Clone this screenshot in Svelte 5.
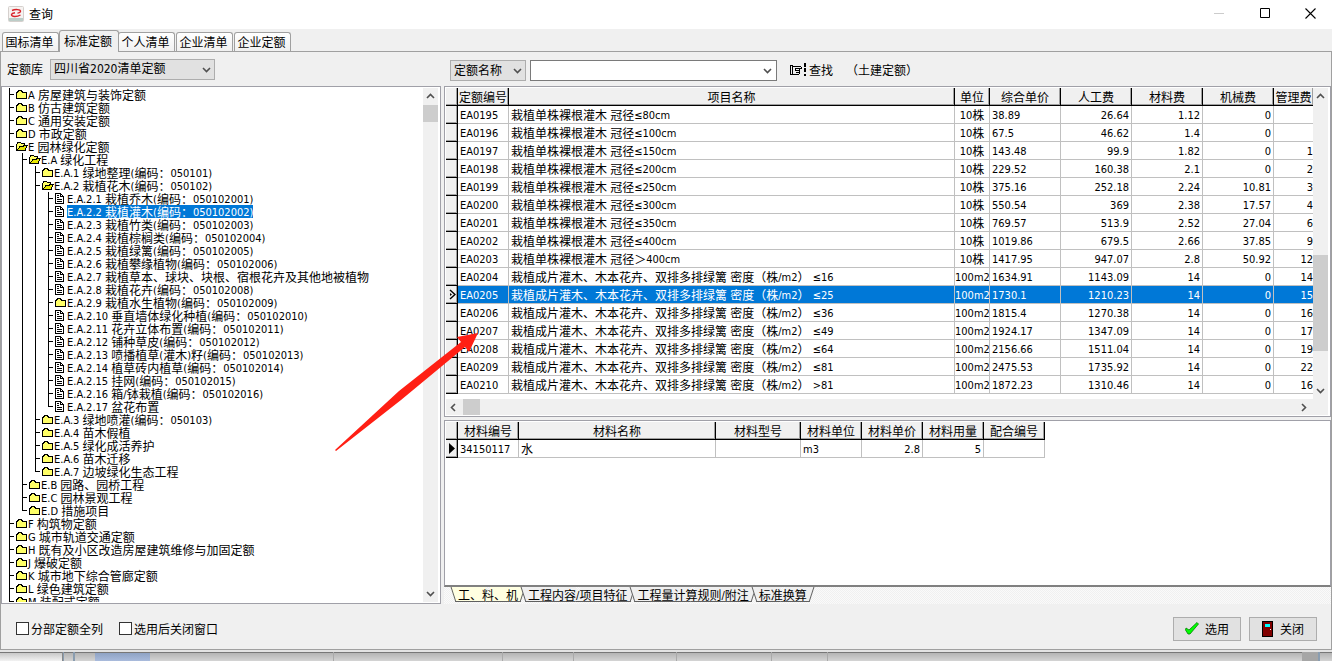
<script lang="ts">
  type Kind = 'folder' | 'open' | 'doc';
  type Node = { depth: number; kind: Kind; text: string };

  const pageTabs = ['国标清单', '标准定额', '个人清单', '企业清单', '企业定额'];
  const detailTabs = ['工、料、机', '工程内容/项目特征', '工程量计算规则/附注', '标准换算'];

  let activePage = $state(1);
  let activeDetail = $state(0);
  let selectedNode = $state(9);
  let selectedRow = $state(10);
  let keyword = $state('');

  const nodes: Node[] = [
    { depth: 0, kind: 'folder', text: 'A 房屋建筑与装饰定额' },
    { depth: 0, kind: 'folder', text: 'B 仿古建筑定额' },
    { depth: 0, kind: 'folder', text: 'C 通用安装定额' },
    { depth: 0, kind: 'folder', text: 'D 市政定额' },
    { depth: 0, kind: 'open', text: 'E 园林绿化定额' },
    { depth: 1, kind: 'open', text: 'E.A 绿化工程' },
    { depth: 2, kind: 'folder', text: 'E.A.1 绿地整理(编码：050101)' },
    { depth: 2, kind: 'open', text: 'E.A.2 栽植花木(编码：050102)' },
    { depth: 3, kind: 'doc', text: 'E.A.2.1 栽植乔木(编码：050102001)' },
    { depth: 3, kind: 'doc', text: 'E.A.2.2 栽植灌木(编码：050102002)' },
    { depth: 3, kind: 'doc', text: 'E.A.2.3 栽植竹类(编码：050102003)' },
    { depth: 3, kind: 'doc', text: 'E.A.2.4 栽植棕榈类(编码：050102004)' },
    { depth: 3, kind: 'doc', text: 'E.A.2.5 栽植绿篱(编码：050102005)' },
    { depth: 3, kind: 'doc', text: 'E.A.2.6 栽植攀缘植物(编码：050102006)' },
    { depth: 3, kind: 'doc', text: 'E.A.2.7 栽植草本、球块、块根、宿根花卉及其他地被植物' },
    { depth: 3, kind: 'doc', text: 'E.A.2.8 栽植花卉(编码：050102008)' },
    { depth: 3, kind: 'folder', text: 'E.A.2.9 栽植水生植物(编码：050102009)' },
    { depth: 3, kind: 'doc', text: 'E.A.2.10 垂直墙体绿化种植(编码：050102010)' },
    { depth: 3, kind: 'doc', text: 'E.A.2.11 花卉立体布置(编码：050102011)' },
    { depth: 3, kind: 'doc', text: 'E.A.2.12 铺种草皮(编码：050102012)' },
    { depth: 3, kind: 'doc', text: 'E.A.2.13 喷播植草(灌木)籽(编码：050102013)' },
    { depth: 3, kind: 'doc', text: 'E.A.2.14 植草砖内植草(编码：050102014)' },
    { depth: 3, kind: 'doc', text: 'E.A.2.15 挂网(编码：050102015)' },
    { depth: 3, kind: 'doc', text: 'E.A.2.16 箱/钵栽植(编码：050102016)' },
    { depth: 3, kind: 'doc', text: 'E.A.2.17 盆花布置' },
    { depth: 2, kind: 'folder', text: 'E.A.3 绿地喷灌(编码：050103)' },
    { depth: 2, kind: 'folder', text: 'E.A.4 苗木假植' },
    { depth: 2, kind: 'folder', text: 'E.A.5 绿化成活养护' },
    { depth: 2, kind: 'folder', text: 'E.A.6 苗木迁移' },
    { depth: 2, kind: 'folder', text: 'E.A.7 边坡绿化生态工程' },
    { depth: 1, kind: 'folder', text: 'E.B 园路、园桥工程' },
    { depth: 1, kind: 'folder', text: 'E.C 园林景观工程' },
    { depth: 1, kind: 'folder', text: 'E.D 措施项目' },
    { depth: 0, kind: 'folder', text: 'F 构筑物定额' },
    { depth: 0, kind: 'folder', text: 'G 城市轨道交通定额' },
    { depth: 0, kind: 'folder', text: 'H 既有及小区改造房屋建筑维修与加固定额' },
    { depth: 0, kind: 'folder', text: 'J 爆破定额' },
    { depth: 0, kind: 'folder', text: 'K 城市地下综合管廊定额' },
    { depth: 0, kind: 'folder', text: 'L 绿色建筑定额' },
    { depth: 0, kind: 'folder', text: 'M 装配式定额' },
  ];

  const single = '栽植单株裸根灌木 冠径';
  const massed = '栽植成片灌木、木本花卉、双排多排绿篱 密度（株/m2） ';

  const rows = [
    ['EA0195', single + '≤80cm', '10株', '38.89', '26.64', '1.12', '0', ''],
    ['EA0196', single + '≤100cm', '10株', '67.5', '46.62', '1.4', '0', ''],
    ['EA0197', single + '≤150cm', '10株', '143.48', '99.9', '1.82', '0', '1'],
    ['EA0198', single + '≤200cm', '10株', '229.52', '160.38', '2.1', '0', '2'],
    ['EA0199', single + '≤250cm', '10株', '375.16', '252.18', '2.24', '10.81', '3'],
    ['EA0200', single + '≤300cm', '10株', '550.54', '369', '2.38', '17.57', '4'],
    ['EA0201', single + '≤350cm', '10株', '769.57', '513.9', '2.52', '27.04', '6'],
    ['EA0202', single + '≤400cm', '10株', '1019.86', '679.5', '2.66', '37.85', '9'],
    ['EA0203', single + '＞400cm', '10株', '1417.95', '947.07', '2.8', '50.92', '12'],
    ['EA0204', massed + '≤16', '100m2', '1634.91', '1143.09', '14', '0', '14'],
    ['EA0205', massed + '≤25', '100m2', '1730.1', '1210.23', '14', '0', '15'],
    ['EA0206', massed + '≤36', '100m2', '1815.4', '1270.38', '14', '0', '16'],
    ['EA0207', massed + '≤49', '100m2', '1924.17', '1347.09', '14', '0', '17'],
    ['EA0208', massed + '≤64', '100m2', '2156.66', '1511.04', '14', '0', '19'],
    ['EA0209', massed + '≤81', '100m2', '2475.53', '1735.92', '14', '0', '22'],
    ['EA0210', massed + '>81', '100m2', '1872.23', '1310.46', '14', '0', '16'],
  ];

  const columns = ['定额编号', '项目名称', '单位', '综合单价', '人工费', '材料费', '机械费', '管理费'];
  const materialColumns = ['材料编号', '材料名称', '材料型号', '材料单位', '材料单价', '材料用量', '配合编号'];
  const material = ['34150117', '水', '', 'm3', '2.8', '5', ''];

  // true when another node follows on this level before its parent closes
  function continues(index: number, level: number) {
    for (let i = index + 1; i < nodes.length; i++) {
      if (nodes[i].depth < level) return false;
      if (nodes[i].depth === level) return true;
    }
    return false;
  }

  // Latin runs are set one size smaller than the Chinese text
  function runs(text: string) {
    return text.split(/([\x20-\x7e≤]+)/).filter((s) => s !== '');
  }
</script>

{#snippet mixed(text: string)}{#each runs(text) as run}{#if /^[\x20-\x7e≤]/.test(run)}<span class="latin">{run}</span>{:else}{run}{/if}{/each}{/snippet}

{#snippet chevron(dir: string)}
  <svg class="chevron {dir}" width="9" height="9" viewBox="0 0 9 9" aria-hidden="true">
    <path d="M1 3 L4.5 6.5 L8 3" fill="none" stroke="currentColor" stroke-width="1.6" />
  </svg>
{/snippet}

{#snippet nodeIcon(kind: Kind)}
  <svg class="node-icon" width="12" height="13" viewBox="0 0 12 13" shape-rendering="crispEdges" aria-hidden="true">
    {#if kind === 'doc'}
      <path d="M.5 1.500h5l3 3v7h-8z" fill="#fff" stroke="#000" />
      <path d="M5.500 1.500v3h3M2 3.500h2M2 5.500h2M2 7.500h5M2 9.500h5" fill="none" stroke="#000" />
    {:else if kind === 'open'}
      <path d="M.5 10.5v-6l1-1v-1h3l1 1h3v3" fill="#ffff66" stroke="#000" />
      <path d="M1 10.5l3-4h3l1-1h3l-2 5h-8z" fill="#e6e600" stroke="#000" />
    {:else}
      <path d="M.5 4.500l1-1h1l1-1h2l1 1h4v7h-10z" fill="#ffff66" stroke="none" />
      <path d="M.5 10.5v-6h1v-1h1v-1h3v1h1v1h4v6h-10z" fill="none" stroke="#000" />
    {/if}
  </svg>
{/snippet}

<div class="window">
  <header class="titlebar">
    <svg class="logo" width="16" height="16" viewBox="0 0 16 16" aria-hidden="true">
      <rect x=".5" y=".5" width="15" height="15" rx="1" fill="#f6f3f1" stroke="#d5d0cd" />
      <path d="M1 12h14v3H1z" fill="#bccdc8" />
      <path d="M4 4.500C7 3 13 3.200 12.500 5.500C12.200 6.800 10.500 7 9.500 7.200M12.500 9C9 11 3 11 3.500 8.500C3.800 7.500 5.500 7 7 6.800" fill="none" stroke="#d8232a" stroke-width="1.400" />
    </svg>
    <span class="title">查询</span>
    <div class="window-buttons">
      <button aria-label="最小化" disabled>
        <svg width="11" height="11" viewBox="0 0 11 11"><path d="M0 5.500h10" stroke="#ccc" /></svg>
      </button>
      <button aria-label="最大化">
        <svg width="11" height="11" viewBox="0 0 11 11"><path d="M.5.500h9v9h-9z" fill="none" stroke="#000" /></svg>
      </button>
      <button aria-label="关闭窗口">
        <svg width="11" height="11" viewBox="0 0 11 11"><path d="M.5.500l10 10M10.500.500l-10 10" stroke="#000" stroke-width="1.100" /></svg>
      </button>
    </div>
  </header>

  <nav class="page-tabs">
    {#each pageTabs as tab, i}
      <button class="page-tab" class:active={i === activePage} onclick={() => (activePage = i)}>{tab}</button>
    {/each}
  </nav>

  <main class="page">
    <div class="columns">
      <section class="left">
        <div class="toolbar">
          <label for="library">定额库</label>
          <div class="select library">
            <select id="library"><option>四川省2020清单定额</option></select>
            {@render chevron('down')}
          </div>
        </div>

        <div class="panel tree-panel">
          <ul class="tree">
            {#each nodes as node, i}
              <li>
                {#each Array(node.depth) as _, level}
                  <span class="guide" class:line={continues(i, level)}></span>
                {/each}
                <span class="branch" class:last={!continues(i, node.depth)}></span>
                {@render nodeIcon(node.kind)}
                <button class="node" class:selected={i === selectedNode} onclick={() => (selectedNode = i)}>{@render mixed(node.text)}</button>
              </li>
            {/each}
          </ul>
          <div class="scroll vertical">
            <button aria-label="向上滚动">{@render chevron('up')}</button>
            <div class="track"><div class="thumb tree-thumb"></div></div>
            <button aria-label="向下滚动">{@render chevron('down')}</button>
          </div>
        </div>
      </section>

      <section class="right">
        <div class="toolbar search">
          <div class="select field">
            <select aria-label="查找字段"><option>定额名称</option></select>
            {@render chevron('down')}
          </div>
          <div class="combo">
            <input type="text" aria-label="查找内容" bind:value={keyword} />
            <button aria-label="展开">{@render chevron('down')}</button>
          </div>
          <button class="find">
            <svg width="17" height="14" viewBox="0 0 17 14" shape-rendering="crispEdges" aria-hidden="true">
              <path d="M0 2.500h3M0 11.500h3M2.500 3v8M.5 3v8M3 3.500h8M5 5.500h7M11.500 4v1M5.500 6v2M6 7.500h3M6 9.500h3M9.500 6v5M3 11.500h6" fill="none" stroke="#000" />
              <path d="M14 0h2v4h-2zM14 5h2v4h-2zM14 11h2v2h-2z" />
            </svg>
            查找
          </button>
          <span class="scope">（土建定额）</span>
        </div>

        <div class="panel quota-panel">
          <div class="quota-main">
            <div class="quota-view">
              <table class="grid quota">
                <colgroup>
                  <col class="w-mark" /><col class="w-code" /><col /><col class="w-unit" />
                  <col class="w-cost" /><col class="w-cost" /><col class="w-cost" /><col class="w-cost" /><col class="w-fee" />
                </colgroup>
                <thead>
                  <tr>
                    <th class="mark"></th>
                    {#each columns as name}<th>{name}</th>{/each}
                  </tr>
                </thead>
                <tbody>
                  {#each rows as row, r}
                    <tr class:selected={r === selectedRow} onclick={() => (selectedRow = r)}>
                      <td class="mark">
                        {#if r === selectedRow}
                          <svg width="7" height="11" viewBox="0 0 7 11" aria-hidden="true">
                            <path d="M1 1l5 4.500-5 4.500" fill="none" stroke="#000" stroke-width="1.500" />
                            <path d="M1 4v3l2-1.500z" />
                          </svg>
                        {/if}
                      </td>
                      {#each row as cell, c}
                        <td class:num={c > 3} class:unit={c === 2}>{@render mixed(cell)}</td>
                      {/each}
                    </tr>
                  {/each}
                </tbody>
              </table>
            </div>
            <div class="scroll horizontal">
              <button aria-label="向左滚动">{@render chevron('left')}</button>
              <div class="track"><div class="thumb side-thumb"></div></div>
              <button aria-label="向右滚动">{@render chevron('right')}</button>
            </div>
          </div>
          <div class="scroll vertical quota-scroll">
            <button aria-label="向上滚动">{@render chevron('up')}</button>
            <div class="track low"><div class="thumb quota-thumb"></div></div>
            <button aria-label="向下滚动">{@render chevron('down')}</button>
          </div>
        </div>

        <div class="panel material-panel">
          <table class="grid material">
            <colgroup>
              <col class="w-mark" /><col class="w-short" /><col class="w-name" /><col class="w-model" />
              <col class="w-short" /><col class="w-short" /><col class="w-short" /><col class="w-short" />
            </colgroup>
            <thead>
              <tr>
                <th class="mark"></th>
                {#each materialColumns as name}<th>{name}</th>{/each}
              </tr>
            </thead>
            <tbody>
              <tr>
                <td class="mark">
                  <svg width="7" height="11" viewBox="0 0 7 11" aria-hidden="true"><path d="M0 0l6 5.500L0 11z" /></svg>
                </td>
                {#each material as cell, c}
                  <td class:num={c === 4 || c === 5}>{@render mixed(cell)}</td>
                {/each}
              </tr>
            </tbody>
          </table>
        </div>

        <div class="detail-tabs">
          {#each detailTabs as tab, i}
            <button class="detail-tab" class:active={i === activeDetail} onclick={() => (activeDetail = i)}>{@render mixed(tab)}</button>
          {/each}
        </div>
      </section>
    </div>

    <footer class="footer">
      <label><input type="checkbox" />分部定额全列</label>
      <label><input type="checkbox" />选用后关闭窗口</label>
      <div class="actions">
        <button class="action">
          <svg width="14" height="13" viewBox="0 0 14 13" aria-hidden="true">
            <path d="M1 6l3 2 8-7.500 1.500 1.500-8.500 10h-2l-2.500-4z" fill="#0f0" stroke="#008000" stroke-width=".8" />
          </svg>
          选用
        </button>
        <button class="action">
          <svg width="12" height="16" viewBox="0 0 12 16" shape-rendering="crispEdges" aria-hidden="true">
            <path d="M.5.500h10v15h-10z" fill="#800000" stroke="#000" stroke-width="1" />
            <path d="M3 3h5v3h-5z" fill="#0ff" />
            <path d="M8 8h1v1h-1z" fill="#fff" />
          </svg>
          关闭
        </button>
      </div>
    </footer>
  </main>

  <div class="backdrop">
    <span class="back-left"></span>
    <span class="back-split"></span>
    <span class="back-blue"></span>
    {#each [184, 169, 71, 103, 95, 56] as width}
      <span class="back-cell" style="width: {width}px"></span>
    {/each}
    <span class="back-rest"></span>
    <span class="back-bar"></span>
    <span class="back-edge"></span>
  </div>

  <svg class="arrow" width="144" height="119" viewBox="0 0 144 119" aria-hidden="true">
    <path d="M0 117L64 58 126 9 122 4 143 0 134 19 130 14 66 67 1 118z" fill="#ff1f14" />
  </svg>
</div>

<style>
  :global(body) {
    margin: 0;
    background: #f0f0f0;
  }

  .window {
    position: relative;
    display: flex;
    flex-direction: column;
    height: 100vh;
    overflow: hidden;
    color: #000;
    font: 12px/16px 'Noto Sans CJK SC', sans-serif;
  }

  .window * { box-sizing: border-box; }

  button, input, select {
    font: inherit;
    color: inherit;
    margin: 0;
  }

  button {
    padding: 0;
    border: 0;
    background: none;
    white-space: nowrap;
  }

  .latin {
    font-family: 'DejaVu Sans Condensed', 'DejaVu Sans', sans-serif;
    font-size: 11px;
    line-height: 10px;
    vertical-align: 1px;
    white-space: pre;
  }

  .titlebar {
    display: flex;
    align-items: center;
    gap: 5px;
    height: 29px;
    flex: none;
    padding: 0 0 2px 8px;
    background: #fff;
  }

  .logo { flex: none; }

  .window-buttons {
    display: flex;
    margin-left: auto;
  }

  .window-buttons button {
    display: flex;
    align-items: center;
    justify-content: center;
    width: 46px;
    height: 26px;
  }

  .window-buttons button:last-child { width: 44px; }

  .page-tabs {
    display: flex;
    align-items: flex-end;
    gap: 1px;
    height: 22px;
    flex: none;
    padding-left: 2px;
  }

  .page-tab {
    height: 19px;
    width: 57px;
    padding-right: 2px;
    border: 1px solid #a0a0a0;
    border-bottom: 0;
    border-radius: 3px 3px 0 0;
    background: linear-gradient(#fff, #f0f0f0);
  }

  .page-tab.active {
    position: relative;
    height: 22px;
    width: 60px;
    margin: 0 -2px -1px -1px;
    padding-bottom: 2px;
    background: #f0f0f0;
  }

  .page {
    display: flex;
    flex-direction: column;
    flex: 1;
    min-height: 0;
    border: 1px solid #a0a0a0;
  }

  .columns {
    display: flex;
    gap: 3px;
    flex: 1;
    min-height: 0;
  }

  .left {
    display: flex;
    flex-direction: column;
    width: 34%;
    max-width: 440px;
  }

  .right {
    display: flex;
    flex-direction: column;
    flex: 1;
    min-width: 0;
  }

  .toolbar {
    display: flex;
    align-items: center;
    gap: 7px;
    height: 34px;
    flex: none;
    padding-left: 6px;
  }

  .search {
    gap: 4px;
    padding: 2px 0 0 6px;
  }

  .select {
    position: relative;
    height: 21px;
  }

  .library { width: 165px; }
  .field { width: 76px; }

  .select select {
    appearance: none;
    display: block;
    width: 100%;
    height: 100%;
    padding: 0 18px 0 3px;
    border: 1px solid #adadad;
    border-radius: 0;
    background: #e1e1e1;
  }

  .library select { font-family: 'DejaVu Sans Condensed', 'Noto Sans CJK SC', sans-serif; }

  .select .chevron {
    position: absolute;
    top: 6px;
    right: 4px;
    pointer-events: none;
  }

  .combo {
    display: flex;
    width: 247px;
    height: 21px;
    border: 1px solid #7a7a7a;
    background: #fff;
  }

  .combo input {
    flex: 1;
    min-width: 0;
    border: 0;
    outline: 0;
    background: none;
  }

  .combo button {
    display: flex;
    align-items: center;
    justify-content: center;
    width: 17px;
  }

  .chevron {
    display: block;
    flex: none;
    width: 9px;
    color: #505050;
  }

  .chevron.up { transform: rotate(180deg); }
  .chevron.left { transform: rotate(90deg); }
  .chevron.right { transform: rotate(-90deg); }

  .find {
    display: flex;
    align-items: center;
    gap: 2px;
    margin-left: 9px;
  }

  .scope { margin-left: 9px; }

  .panel {
    display: flex;
    border: 1px solid #a0a0a8;
    background: #fff;
    min-height: 0;
  }

  .tree-panel {
    flex: 1;
    padding: 1px 2px;
  }

  .tree {
    flex: 1;
    min-width: 0;
    margin: 0;
    padding: 0 0 0 5px;
    list-style: none;
    overflow: hidden;
  }

  .tree li {
    display: flex;
    height: 13px;
    line-height: 13px;
  }

  .guide {
    flex: none;
    width: 13px;
  }

  .guide.line { border-left: 1px solid #000; }

  .branch {
    flex: none;
    width: 7px;
    background:
      linear-gradient(#000, #000) 0 0 / 1px 13px no-repeat,
      linear-gradient(#000, #000) 0 6px / 5px 1px no-repeat;
  }

  .branch.last {
    background:
      linear-gradient(#000, #000) 0 0 / 1px 6px no-repeat,
      linear-gradient(#000, #000) 0 6px / 5px 1px no-repeat;
  }

  .node-icon { flex: none; }

  .node {
    height: 13px;
    line-height: 13px;
    white-space: pre;
  }

  .node.selected {
    background: #0078d7;
    color: #fff;
  }

  .scroll {
    display: flex;
    flex: none;
    background: #f0f0f0;
  }

  .scroll button {
    display: flex;
    align-items: center;
    justify-content: center;
    flex: none;
    width: 15px;
    height: 17px;
  }

  .vertical {
    flex-direction: column;
    width: 15px;
  }

  .horizontal {
    height: 16px;
    padding-right: 2px;
  }

  .track {
    display: flex;
    flex: 1;
  }

  .thumb { background: #cdcdcd; }
  .tree-thumb { width: 15px; height: 17px; }
  .side-thumb { width: 17px; height: 16px; margin-left: 2px; }
  .quota-thumb { width: 15px; height: 96px; }

  .low {
    align-items: flex-end;
    padding-bottom: 31px;
  }

  .quota-panel {
    height: 331px;
    flex: none;
    padding: 1px 2px 1px 1px;
  }

  .quota-main {
    display: flex;
    flex-direction: column;
    flex: 1;
    min-width: 0;
  }

  .quota-view {
    flex: 1;
    min-height: 0;
    overflow: hidden;
  }

  .quota-scroll { padding-bottom: 16px; }

  .grid {
    table-layout: fixed;
    border-collapse: separate;
    border-spacing: 0;
  }

  .quota { width: 100%; }
  .material { width: 599px; }

  .w-mark { width: 12px; }
  .w-code { width: 51px; }
  .w-unit { width: 35px; }
  .w-cost { width: 71px; }
  .w-fee { width: 39px; }
  .w-short { width: 61px; }
  .w-name { width: 197px; }
  .w-model { width: 85px; }

  .grid th, .grid td {
    height: 18px;
    padding: 0;
    line-height: 16px;
    white-space: nowrap;
    overflow: hidden;
  }

  .grid th {
    border-right: 1px solid #000;
    border-bottom: 1px solid #000;
    background: #f0f0f0;
    box-shadow: inset -1px -1px #a0a0a0;
    font-weight: normal;
    text-align: center;
  }

  .quota th:last-child { border-right: 0; }

  .grid td {
    padding: 0 2px;
    border-right: 1px solid #c0c0c0;
    border-bottom: 1px solid #c0c0c0;
  }

  .grid .num { text-align: right; }
  .grid .unit { text-align: center; padding: 0; }

  .quota td:last-child {
    border-right: 0;
    padding-right: 0;
  }

  .grid td.mark {
    padding: 0 0 0 3px;
    border-right-color: #000;
    border-bottom-color: #000;
    background: #f0f0f0;
    box-shadow: inset -1px -1px #a0a0a0;
  }

  .mark svg { display: block; }

  .selected td {
    background: #0078d7;
    color: #fff;
  }

  .material-panel {
    flex: 1;
    align-items: flex-start;
    margin-top: 3px;
    padding: 1px;
    border-bottom: 2px solid #808080;
  }

  .detail-tabs {
    display: flex;
    height: 17px;
    flex: none;
    padding: 0 0 2px 9px;
    background: repeating-conic-gradient(#f0f0f0 0 25%, #fafafa 0 50%) 0 0 / 2px 2px;
  }

  .detail-tab {
    position: relative;
    z-index: 0;
    padding: 0 5px;
    line-height: 15px;
  }

  .detail-tab::before,
  .detail-tab::after {
    content: '';
    position: absolute;
    z-index: -1;
    inset: 0 50% 0 0;
    border: solid #606060;
    border-width: 0 0 1px 1px;
    background: #f0f0f0;
    transform: skewX(18deg);
  }

  .detail-tab::after {
    inset: 0 0 0 50%;
    border-width: 0 1px 1px 0;
    transform: skewX(-18deg);
  }

  .detail-tab.active::before,
  .detail-tab.active::after {
    background: #ffffe1;
  }

  .footer {
    display: flex;
    align-items: center;
    gap: 16px;
    height: 45px;
    flex: none;
    padding: 4px 14px 0 15px;
  }

  .footer label {
    display: flex;
    align-items: center;
    gap: 2px;
  }

  .footer input {
    appearance: none;
    width: 13px;
    height: 13px;
    border: 1px solid #333;
    background: #fff;
  }

  .footer input:checked { background: #0078d7; }

  .actions {
    display: flex;
    gap: 8px;
    margin-left: auto;
  }

  .action {
    display: flex;
    align-items: center;
    justify-content: center;
    gap: 6px;
    width: 68px;
    height: 24px;
    border: 1px solid #adadad;
    background: #e1e1e1;
  }

  .backdrop {
    display: flex;
    height: 11px;
    flex: none;
    border-top: 2px solid #e3e3e3;
    background: linear-gradient(#777 1px, #b4b4b4 1px, #d4d4d4);
  }

  .backdrop span { flex: none; }

  .back-left {
    width: 63px;
    border-right: 1px solid #888;
    background: linear-gradient(#777 1px, #c8c8c8 1px, #f2f2f2);
  }

  .back-split {
    width: 12px;
    margin-right: 20px;
    border: solid #8a9db0;
    border-width: 0 2px 0 1px;
  }

  .back-blue {
    width: 55px;
    background: linear-gradient(#777 1px, #8fa3c4 1px, #a9bbdc);
  }

  .back-cell { border-right: 1px solid #aaa; }
  .backdrop .back-rest { flex: 1; }

  .back-bar {
    width: 16px;
    background: #a6a6a6;
  }

  .back-edge {
    width: 14px;
    border-left: 2px solid #8a9db0;
  }

  .arrow {
    position: absolute;
    left: 335px;
    top: 333px;
    pointer-events: none;
  }
</style>
